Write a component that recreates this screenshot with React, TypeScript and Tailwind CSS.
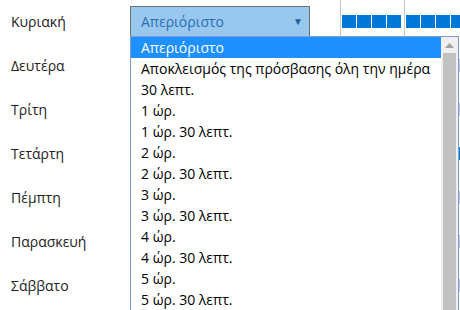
import React from 'react';

const days = ['Κυριακή', 'Δευτέρα', 'Τρίτη', 'Τετάρτη', 'Πέμπτη', 'Παρασκευή', 'Σάββατο'];

const options = [
  'Απεριόριστο',
  'Αποκλεισμός της πρόσβασης όλη την ημέρα',
  '30 λεπτ.',
  '1 ώρ.',
  '1 ώρ. 30 λεπτ.',
  '2 ώρ.',
  '2 ώρ. 30 λεπτ.',
  '3 ώρ.',
  '3 ώρ. 30 λεπτ.',
  '4 ώρ.',
  '4 ώρ. 30 λεπτ.',
  '5 ώρ.',
  '5 ώρ. 30 λεπτ.',
];

function HourGroup({ active }: { active: boolean }) {
  return (
    <div className="flex h-full shrink-0 gap-[1px] border-l border-[#c8c8c8] pl-[1px] pr-[3px] pt-[15px]">
      {[0, 1, 2, 3].map((i) => (
        <div key={i} className={`h-[13px] w-[14px] ${active ? 'bg-[#0078d7]' : 'bg-[#c9c9c9]'}`} />
      ))}
    </div>
  );
}

export default function App() {
  return (
    <div
      className="relative h-[310px] w-[460px] overflow-hidden bg-white text-[14px] text-[#222]"
      style={{ fontFamily: '"Open Sans", "Noto Sans", sans-serif' }}
    >
      {days.map((day, idx) => (
        <div key={day} className="flex h-[44px]">
          <div className="w-[130px] shrink-0 pl-[11px] pt-[6px] leading-[31px]">{day}</div>
          <div className="w-[210px] shrink-0 pt-[6px]">
            {/* only the first row's select is visible; the others sit under the open list */}
            <div className="flex h-[31px] w-[180px] items-center justify-between border border-[#6e6e6e] bg-[#99c8ef] pl-[10px] pr-[6px] text-[#2a6cb3]">
              {idx === 0 && (
                <>
                  <span>Απεριόριστο</span>
                  <span className="text-[10px] text-[#1f5da6]">▼</span>
                </>
              )}
            </div>
          </div>
          <HourGroup active={idx === 0 || idx === 3} />
          <HourGroup active={idx === 0 || idx === 3} />
        </div>
      ))}

      {/* open dropdown list */}
      <div className="absolute left-[130px] top-[36px] flex h-[290px] w-[329px] border border-[#7a9cd3] bg-white">
        <div className="flex-1">
          {options.map((o, i) => (
            <div
              key={o}
              className={`h-[21px] whitespace-nowrap pl-[10px] leading-[21px] ${
                i === 0 ? 'bg-[#1e90ff] text-white' : 'text-black'
              }`}
            >
              {o}
            </div>
          ))}
        </div>
        <div className="flex w-[17px] flex-col items-center bg-[#f0f0f0]">
          <div className="flex h-[16px] items-center justify-center">
            <svg width="9" height="5" viewBox="0 0 9 5">
              <path d="M0 5 L4.5 0 L9 5 Z" fill="#a3a3a3" />
            </svg>
          </div>
          <div className="w-[13px] flex-1 bg-[#c1c1c1]" />
        </div>
      </div>
    </div>
  );
}
